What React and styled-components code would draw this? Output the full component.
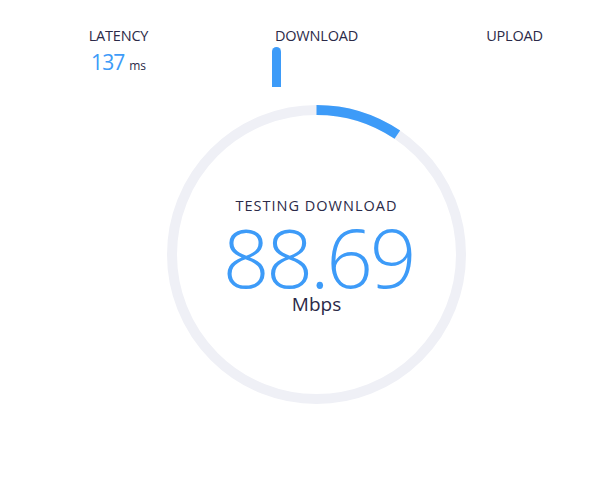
import React from "react";
import styled, { createGlobalStyle } from "styled-components";

const GlobalStyle = createGlobalStyle`
  html, body {
    margin: 0;
    padding: 0;
    background: #ffffff;
    overflow: hidden;
  }
  body {
    font-family: "Open Sans", "Noto Sans", "Liberation Sans", sans-serif;
    color: #2b2a48;
  }
`;

const RADIUS = 144.5;
const STROKE = 10;
const SIZE = 299;

function App() {
  const progress = 34 / 360;
  const circumference = 2 * Math.PI * RADIUS;
  const history = [40];

  return (
    <Page>
      <GlobalStyle />
      <Stats>
        <Stat>
          <Label>LATENCY</Label>
          <Value>
            137 <Unit>ms</Unit>
          </Value>
        </Stat>
        <Stat>
          <Label>DOWNLOAD</Label>
          <Spark>
            {history.map((h, i) => (
              <SparkBar key={i} style={{ height: h }} />
            ))}
          </Spark>
        </Stat>
        <Stat>
          <Label>UPLOAD</Label>
        </Stat>
      </Stats>

      <Gauge>
        <Ring width={SIZE} height={SIZE} viewBox={`0 0 ${SIZE} ${SIZE}`}>
          <circle
            cx={SIZE / 2}
            cy={SIZE / 2}
            r={RADIUS}
            fill="none"
            stroke="#eff0f6"
            strokeWidth={STROKE}
          />
          <circle
            cx={SIZE / 2}
            cy={SIZE / 2}
            r={RADIUS}
            fill="none"
            stroke="#3d9bf8"
            strokeWidth={STROKE}
            strokeDasharray={`${circumference * progress} ${circumference}`}
            transform={`rotate(-90 ${SIZE / 2} ${SIZE / 2})`}
          />
        </Ring>
        <Readout>
          <Status>TESTING DOWNLOAD</Status>
          <Speed>88.69</Speed>
          <SpeedUnit>Mbps</SpeedUnit>
        </Readout>
      </Gauge>
    </Page>
  );
}

export default App;

const Page = styled.div`
  width: 594px;
  margin-left: 19.5px;
  padding-top: 25px;
  display: flex;
  flex-direction: column;
  align-items: center;
`;

const Stats = styled.div`
  display: grid;
  grid-template-columns: repeat(3, 198px);
  height: 80px;
`;

const Stat = styled.div`
  display: flex;
  flex-direction: column;
  align-items: center;
`;

const Label = styled.div`
  font-size: 14.5px;
  line-height: 22px;
  letter-spacing: -0.2px;
  color: #2b2a48;
`;

const Value = styled.div`
  font-size: 21px;
  line-height: 31px;
  letter-spacing: -0.8px;
  color: #3d9bf8;
`;

const Unit = styled.span`
  font-size: 12px;
  letter-spacing: 0;
  color: #2b2a48;
`;

const Spark = styled.div`
  width: 90px;
  height: 40px;
  display: flex;
  align-items: flex-end;
`;

const SparkBar = styled.div`
  width: 9px;
  background: #3d9bf8;
  border-radius: 4.5px 4.5px 0 0;
`;

const Gauge = styled.div`
  display: grid;
  width: ${SIZE}px;
  height: ${SIZE}px;

  > * {
    grid-area: 1 / 1;
  }
`;

const Ring = styled.svg`
  display: block;
`;

const Readout = styled.div`
  display: flex;
  flex-direction: column;
  align-items: center;
  justify-content: center;
`;

const Status = styled.div`
  font-size: 14.5px;
  letter-spacing: 1px;
  line-height: 20px;
  margin-bottom: 2px;
  color: #2b2a48;
`;

const Speed = styled.div`
  font-size: 82px;
  font-weight: 350;
  line-height: 76px;
  letter-spacing: -3.2px;
  margin-right: -3.2px;
  color: #3d9bf8;
`;

const SpeedUnit = styled.div`
  font-size: 19px;
  line-height: 20px;
  color: #2b2a48;
`;
